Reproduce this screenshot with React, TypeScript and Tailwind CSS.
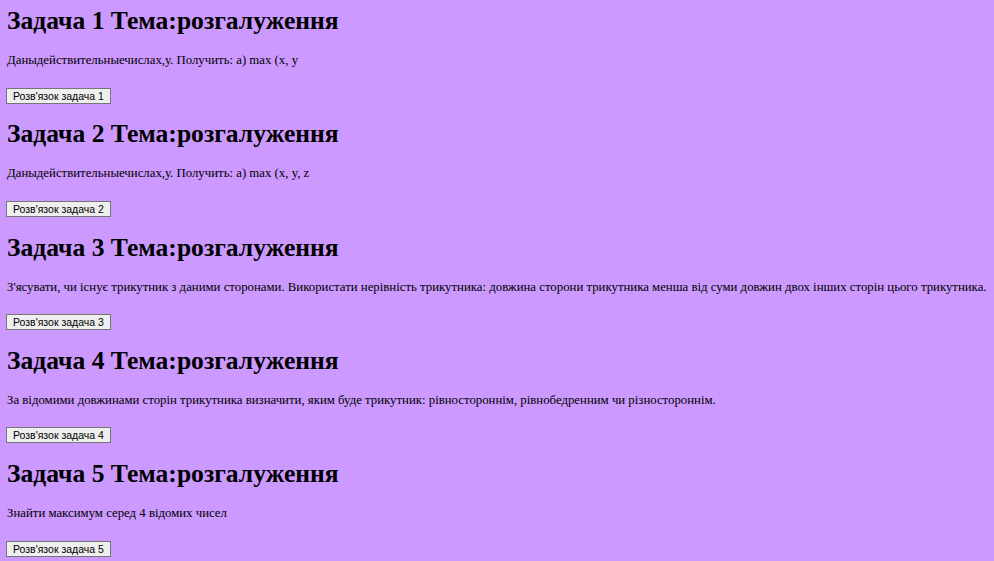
import React from "react";

const tasks = [
  { n: 1, text: "Даныдействительныечислах,у. Получить: а) max (x, y" },
  { n: 2, text: "Даныдействительныечислах,у. Получить: а) max (x, y, z" },
  {
    n: 3,
    text: "З'ясувати, чи існує трикутник з даними сторонами. Використати нерівність трикутника: довжина сторони трикутника менша від суми довжин двох інших сторін цього трикутника.",
  },
  {
    n: 4,
    text: "За відомими довжинами сторін трикутника визначити, яким буде трикутник: рівностороннім, рівнобедренним чи різностороннім.",
  },
  { n: 5, text: "Знайти максимум серед 4 відомих чисел" },
];

export default function App() {
  return (
    <div
      className="min-h-screen bg-[#cc99ff] pl-[7px] pt-[6px] text-black"
      style={{ fontFamily: '"Liberation Serif", "Times New Roman", serif' }}
    >
      {tasks.map((t) => (
        <section key={t.n} className="flex flex-col items-start h-[113.25px]">
          <h2 className="text-[25.6px] font-bold leading-[30px] whitespace-nowrap">
            Задача {t.n} Тема:розгалуження
          </h2>
          <p className="mt-[17px] text-[12.8px] leading-[15px] whitespace-nowrap">{t.text}</p>
          <button
            className="mt-[19.5px] ml-[-1px] h-[16px] px-[6px] border border-[#767676] bg-[#efefef] text-[10.5px] leading-[14px] text-black"
            style={{ fontFamily: '"Liberation Sans", Arial, sans-serif' }}
          >
            Розв'язок задача {t.n}
          </button>
        </section>
      ))}
    </div>
  );
}
